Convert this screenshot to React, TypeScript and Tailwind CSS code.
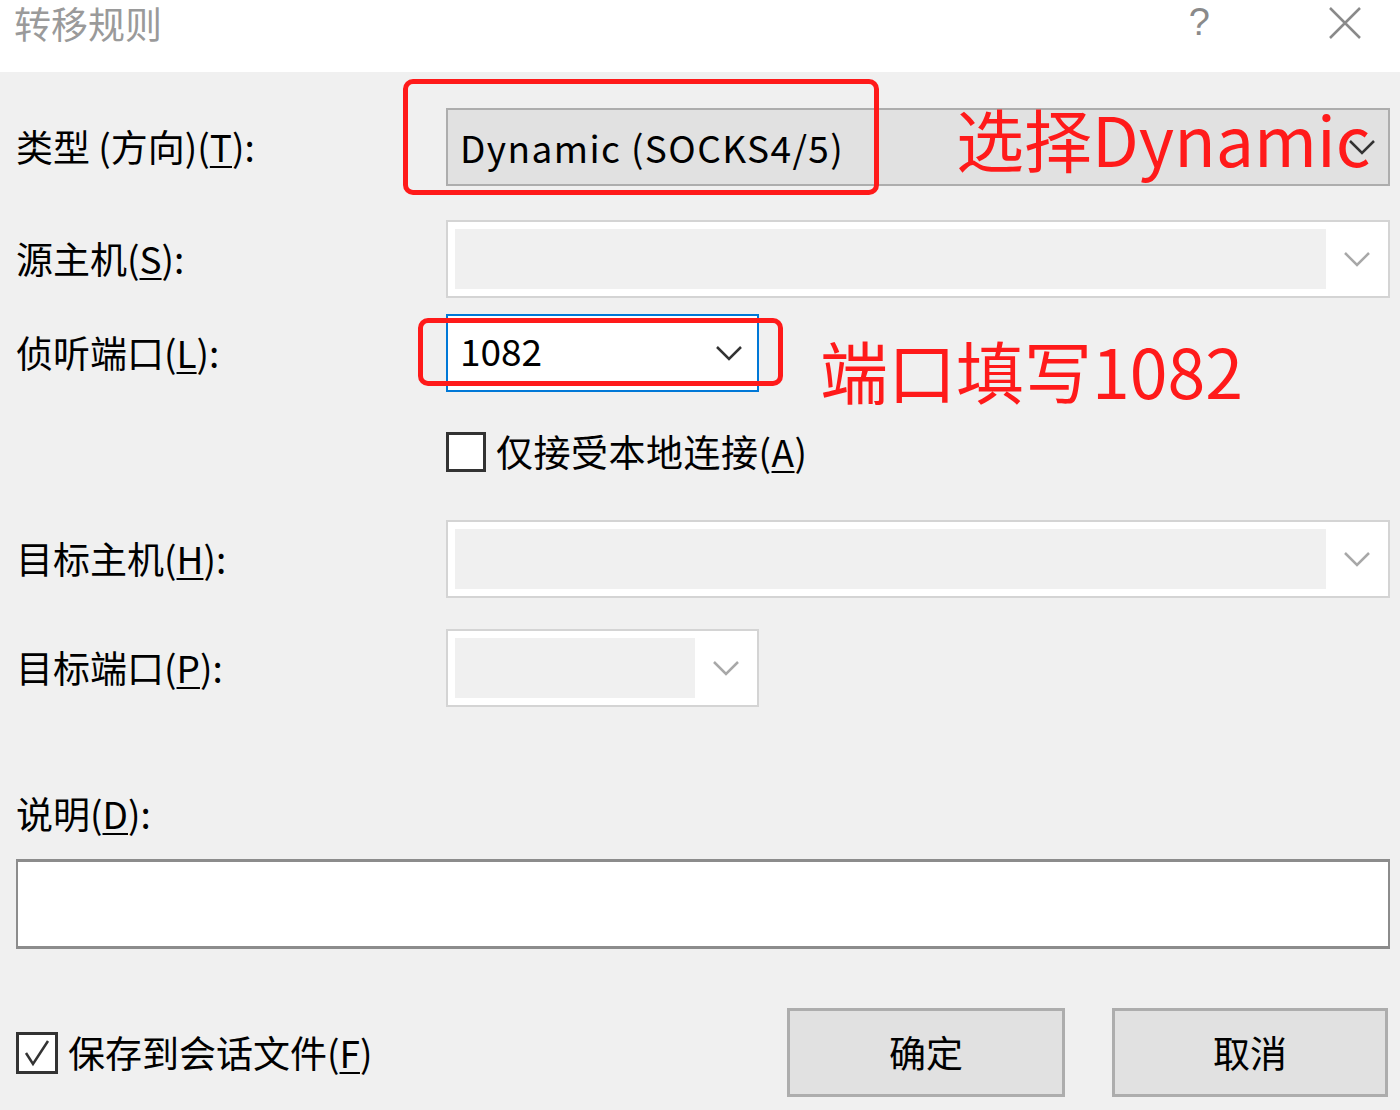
import { FC, ReactNode } from "react";

const font = { fontFamily: '"Noto Sans CJK SC", "Noto Sans", sans-serif' };

const Chevron: FC<{ className?: string }> = ({ className }) => (
	<svg width="28" height="16" viewBox="0 0 28 16" className={className}>
		<polyline points="2,2 14,14 26,2" fill="none" stroke="currentColor" strokeWidth="2.5" />
	</svg>
);

const Label: FC<{ children: ReactNode; k: string; rest?: string }> = ({ children, k, rest = "):" }) => (
	<span className="text-[37px] leading-none text-black">
		{children}(<span className="underline underline-offset-[4px] decoration-2">{k}</span>
		{rest}
	</span>
);

const DisabledCombo: FC<{ wide?: boolean }> = ({ wide }) => (
	<div
		className={`h-[78px] ${wide ? "w-[944px]" : "w-[313px]"} flex items-center bg-white border-2 border-[#d4d4d4] pl-[7px]`}
	>
		<div className="flex-1 h-[60px] bg-[#f0f0f0]" />
		<div className="w-[62px] flex justify-center">
			<Chevron className="text-[#a8a8a8]" />
		</div>
	</div>
);

const Row: FC<{ label: ReactNode; children: ReactNode; className?: string }> = ({ label, children, className }) => (
	<div className={`flex items-center pr-[10px] ${className ?? ""}`}>
		<div className="w-[446px] pl-[16px]">{label}</div>
		{children}
	</div>
);

const App: FC = () => {
	return (
		<div className="relative w-[1400px] h-[1110px] bg-[#f0f0f0] overflow-hidden" style={font}>
			{/* title bar */}
			<div className="h-[72px] bg-white flex items-start justify-between pl-[14px] pr-[38px]">
				<span className="text-[37px] leading-[1.2] mt-[1px] text-[#9a9a9a]">转移规则</span>
				<div className="flex items-start gap-[118px] mt-[3px] text-[#8a8a8a]">
					<span className="text-[38px] leading-none" style={{ fontFamily: '"Liberation Sans", sans-serif' }}>?</span>
					<svg width="34" height="34" viewBox="0 0 34 34" className="mt-[3px]">
						<path d="M2 2 L32 32 M32 2 L2 32" stroke="currentColor" strokeWidth="2.5" />
					</svg>
				</div>
			</div>

			<div className="flex flex-col">
				<Row className="mt-[36px]" label={<Label k="T">类型 (方向)</Label>}>
					<div className="h-[78px] w-[944px] flex items-center justify-between bg-[#e1e1e1] border-2 border-[#adadad] pl-[12px] pr-[12px]">
						<span className="text-[37px] leading-none tracking-[1.4px] text-black">Dynamic (SOCKS4/5)</span>
						<Chevron className="text-[#333]" />
					</div>
				</Row>

				<Row className="mt-[34px]" label={<Label k="S">源主机</Label>}>
					<DisabledCombo wide />
				</Row>

				<Row className="mt-[16px]" label={<Label k="L">侦听端口</Label>}>
					<div className="h-[78px] w-[313px] flex items-center justify-between bg-white border-2 border-[#0078d7] pl-[12px] pr-[14px]">
						<span className="text-[37px] leading-none mb-[6px] text-black">1082</span>
						<Chevron className="text-[#333]" />
					</div>
				</Row>

				<div className="mt-[40px] pl-[446px] flex items-center gap-[10px] h-[40px]">
					<div className="w-[40px] h-[40px] bg-white border-[3px] border-[#333]" />
					<span className="tracking-[0.5px]">
						<Label k="A" rest=")">仅接受本地连接</Label>
					</span>
				</div>

				<Row className="mt-[48px]" label={<Label k="H">目标主机</Label>}>
					<DisabledCombo wide />
				</Row>

				<Row className="mt-[31px]" label={<Label k="P">目标端口</Label>}>
					<DisabledCombo />
				</Row>

				<div className="mt-[84px] pl-[16px] h-[44px] flex items-center">
					<Label k="D">说明</Label>
				</div>

				<div className="mt-[24px] mx-[16px] mr-[10px] h-[90px] bg-white border-y-[3px] border-x-2 border-[#8c8c8c]" />

				<div className="mt-[59px] flex items-center justify-between pl-[16px] pr-[12px]">
					<div className="flex items-center gap-[10px]">
						<div className="w-[42px] h-[42px] bg-white border-[3px] border-[#333] flex items-center justify-center">
							<svg width="30" height="30" viewBox="0 0 30 30">
								<polyline points="4,15 11,26 26,3" fill="none" stroke="#333" strokeWidth="2.5" />
							</svg>
						</div>
						<Label k="F" rest=")">保存到会话文件</Label>
					</div>
					<div className="flex gap-[47px]">
						<button className="w-[278px] h-[89px] bg-[#e1e1e1] border-[3px] border-[#adadad] text-[37px] text-black">确定</button>
						<button className="w-[276px] h-[89px] bg-[#e1e1e1] border-[3px] border-[#adadad] text-[37px] text-black">取消</button>
					</div>
				</div>
			</div>

			{/* red annotations */}
			<div className="absolute left-[403px] top-[79px] w-[476px] h-[116px] border-[5px] border-[#ff1a1a] rounded-[10px]" />
			<div className="absolute left-[956px] top-[104px] text-[68px] leading-none text-[#ff1a1a]">选择Dynamic</div>
			<div className="absolute left-[418px] top-[318px] w-[365px] h-[68px] border-[5px] border-[#ff1a1a] rounded-[10px]" />
			<div className="absolute left-[820px] top-[336px] text-[68px] leading-none text-[#ff1a1a]">端口填写1082</div>
		</div>
	);
};

export default App;
